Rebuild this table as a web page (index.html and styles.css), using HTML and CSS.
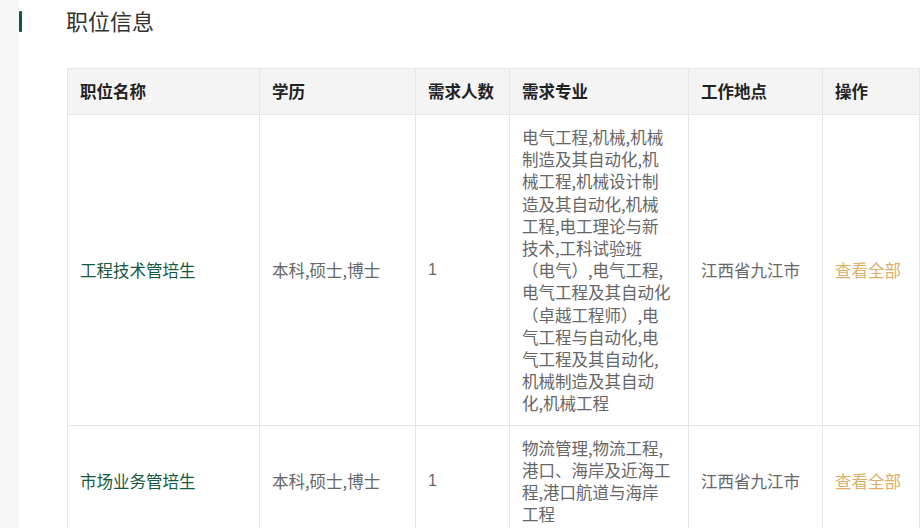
FILE: index.html
```html
<!DOCTYPE html>
<html lang="zh-CN">
<head>
<meta charset="utf-8">
<title>职位信息</title>
<link rel="stylesheet" href="styles.css">
</head>
<body>
<div class="page">
  <aside class="strip"></aside>
  <main class="main">
    <div class="section-head">
      <span class="mark"></span>
      <h2 class="title">职位信息</h2>
    </div>
    <table class="jobs">
      <colgroup>
        <col class="c1"><col class="c2"><col class="c3"><col class="c4"><col class="c5"><col class="c6">
      </colgroup>
      <thead>
        <tr>
          <th>职位名称</th>
          <th>学历</th>
          <th>需求人数</th>
          <th>需求专业</th>
          <th>工作地点</th>
          <th>操作</th>
        </tr>
      </thead>
      <tbody>
        <tr>
          <td class="name">工程技术管培生</td>
          <td>本科,硕士,博士</td>
          <td class="num">1</td>
          <td class="major">电气工程,机械,机械制造及其自动化,机械工程,机械设计制造及其自动化,机械工程,电工理论与新技术,工科试验班（电气）,电气工程,电气工程及其自动化（卓越工程师）,电气工程与自动化,电气工程及其自动化,机械制造及其自动化,机械工程</td>
          <td>江西省九江市</td>
          <td class="action">查看全部</td>
        </tr>
        <tr>
          <td class="name">市场业务管培生</td>
          <td>本科,硕士,博士</td>
          <td class="num">1</td>
          <td class="major">物流管理,物流工程,港口、海岸及近海工程,港口航道与海岸工程</td>
          <td>江西省九江市</td>
          <td class="action">查看全部</td>
        </tr>
      </tbody>
    </table>
  </main>
</div>
</body>
</html>
```

FILE: styles.css
```css
* { box-sizing: border-box; }
html, body {
  margin: 0;
  padding: 0;
  background: #ffffff;
  font-family: "Noto Sans CJK SC", "Noto Sans", sans-serif;
}
.page {
  display: flex;
  min-height: 528px;
}
.strip {
  flex: 0 0 19px;
  background: #f7f7f7;
}
.main {
  flex: 1;
}
.section-head {
  display: flex;
  align-items: flex-start;
  height: 43px;
}
.mark {
  margin-top: 11px;
  width: 3px;
  height: 21px;
  background: #0f5a3e;
  border-radius: 1px;
}
.title {
  margin: 9px 0 0 44px;
  font-size: 22px;
  font-weight: normal;
  color: #333333;
  line-height: 1;
}
.jobs {
  margin: 25px 0 0 48px;
  width: 853px;
  border-collapse: collapse;
  table-layout: fixed;
  font-size: 16.5px;
}
.c1 { width: 192px; }
.c2 { width: 156px; }
.c3 { width: 94px; }
.c4 { width: 179px; }
.c5 { width: 134px; }
.c6 { width: 97px; }
.jobs th, .jobs td {
  border: 1px solid #e6e6e6;
  text-align: left;
  padding: 11px 13px 10px 12px;
  line-height: 22.2px;
}
.jobs th {
  background: #f4f4f4;
  color: #222222;
  font-weight: bold;
  height: 46px;
  padding-top: 0;
  padding-bottom: 0;
}
.jobs td {
  color: #666666;
  vertical-align: middle;
  word-break: break-all;
}
.jobs td.major { padding-right: 16px; }
.jobs td.num { font-family: "Liberation Sans", Arial, sans-serif; font-size: 16px; padding-left: 12px; }
.jobs td.name { color: #155a3f; }
.jobs td.action { color: #dcae6a; }
```
